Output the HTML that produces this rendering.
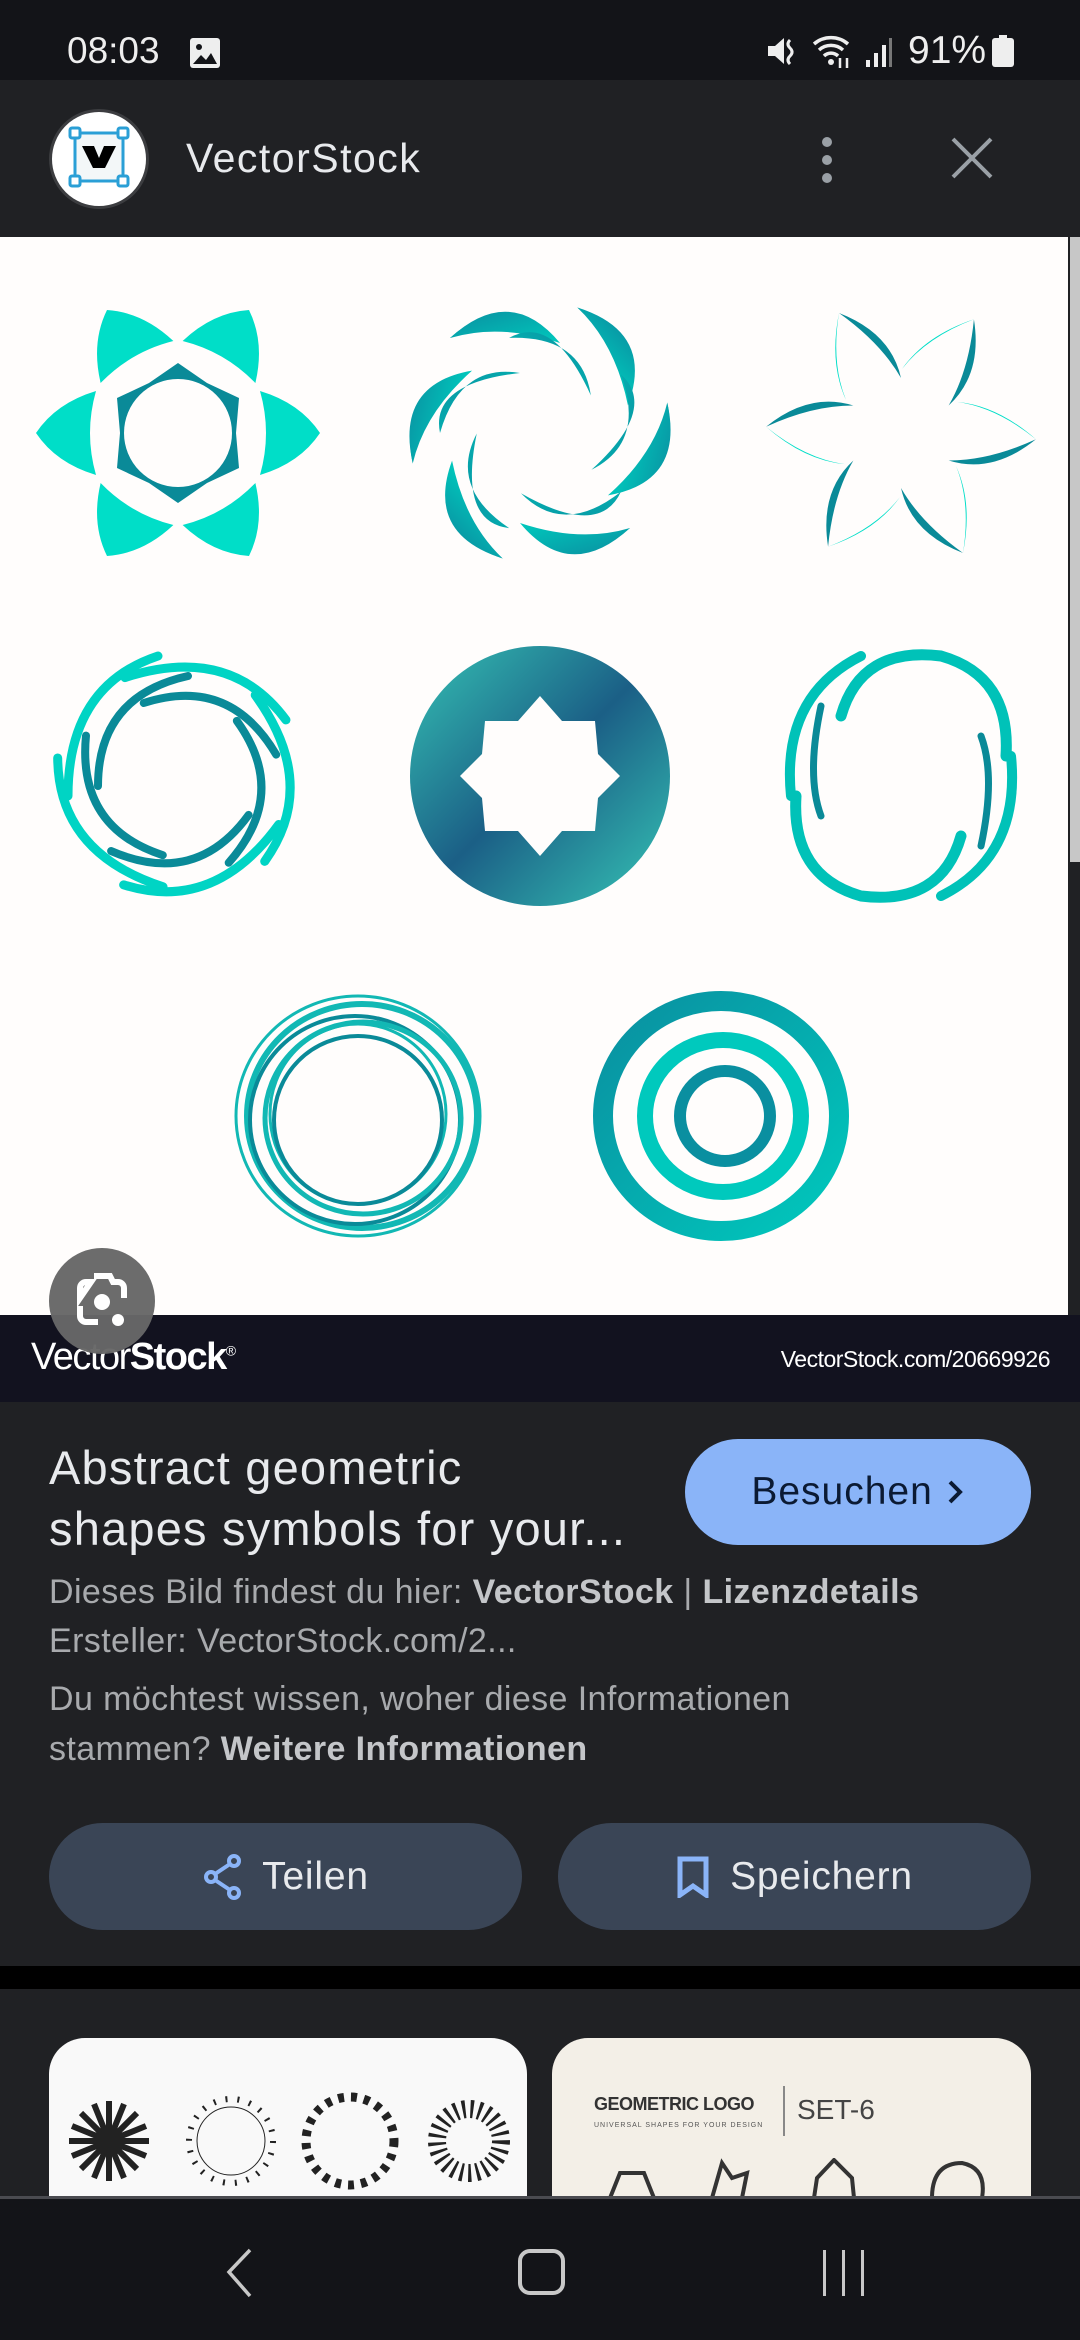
<!DOCTYPE html>
<html><head><meta charset="utf-8">
<style>
*{margin:0;padding:0;box-sizing:border-box}
html,body{width:1080px;height:2340px;overflow:hidden;background:#202124;font-family:"Liberation Sans",sans-serif}
.abs{position:absolute}
#status{left:0;top:0;width:1080px;height:80px;background:#131418;color:#eee}
#hdr{left:0;top:80px;width:1080px;height:157px;background:#202124}
#img{left:0;top:237px;width:1068px;height:1078px;background:#fffdfc}
#scroll{left:1068px;top:80px;width:12px;height:1235px;background:#202124}
#thumb{left:1070px;top:237px;width:10px;height:625px;background:#c7c7c7}
#vsbar{left:0;top:1315px;width:1080px;height:87px;background:#12121f;color:#fff}
#info{left:0;top:1402px;width:1080px;height:564px;background:#202124}
.g{color:#a8aaad;font-size:34px;letter-spacing:0.4px;position:absolute;left:49px;white-space:nowrap}
.g b{color:#c4c6c9}
.btn{position:absolute;top:1823px;height:107px;border-radius:54px;background:#3a4556;color:#e8eaed;font-size:39px;letter-spacing:0.8px;display:flex;align-items:center;justify-content:center}
#strip{left:0;top:1966px;width:1080px;height:23px;background:#000}
.card{position:absolute;top:2038px;height:158px;border-radius:36px 36px 0 0;overflow:hidden}
#nav{left:0;top:2196px;width:1080px;height:144px;background:#131418;border-top:3px solid #4a4b50}
</style></head><body>
<div id="status" class="abs">
 <div class="abs" style="left:67px;top:30px;font-size:37px;">08:03</div>
 <svg class="abs" style="left:189px;top:37px" width="32" height="32" viewBox="0 0 32 32"><rect x="1" y="1" width="30" height="30" rx="3" fill="#eee"/><circle cx="10" cy="10" r="3" fill="#131418"/><path d="M4 27 L12 18 L17 23 L22 16 L28 27Z" fill="#131418"/></svg>
 <svg class="abs" style="left:766px;top:34px" width="34" height="34" viewBox="0 0 34 34"><path d="M2 12h7l9-8v26l-9-8H2z" fill="#eee"/><path d="M24 6q-4 4 0 8t0 8 0 8" stroke="#eee" stroke-width="3" fill="none"/></svg>
 <svg class="abs" style="left:812px;top:32px" width="40" height="38" viewBox="0 0 40 38"><path d="M2 12a26 26 0 0 1 34 0M7 18a18 18 0 0 1 24 0M12 24a10 10 0 0 1 14 0" stroke="#eee" stroke-width="3.5" fill="none"/><circle cx="19" cy="30" r="3" fill="#eee"/><path d="M28 26v10M35 36V26" stroke="#eee" stroke-width="2.5"/></svg>
 <svg class="abs" style="left:865px;top:36px" width="28" height="32" viewBox="0 0 28 32"><rect x="1" y="24" width="4" height="7" fill="#eee"/><rect x="9" y="17" width="4" height="14" fill="#eee"/><rect x="17" y="9" width="4" height="22" fill="#eee"/><rect x="24" y="2" width="3" height="29" fill="#777"/></svg>
 <div class="abs" style="left:908px;top:29px;font-size:39px;">91%</div>
 <svg class="abs" style="left:991px;top:35px" width="24" height="32" viewBox="0 0 24 32"><rect x="8" y="0" width="8" height="4" fill="#eee"/><rect x="1" y="3" width="22" height="29" rx="3" fill="#eee"/></svg>
</div>
<div id="hdr" class="abs">
 <div class="abs" style="left:49px;top:29px;width:100px;height:100px;border-radius:50%;background:#fff;border:3px solid #3c3d40"></div>
 <svg class="abs" style="left:68px;top:46px" width="62" height="62" viewBox="0 0 62 62"><rect x="7" y="7" width="48" height="48" fill="#f3f7f8" stroke="#2a9fd6" stroke-width="3"/><rect x="2" y="2" width="10" height="10" rx="2" fill="#fff" stroke="#2a9fd6" stroke-width="3"/><rect x="50" y="2" width="10" height="10" rx="2" fill="#fff" stroke="#2a9fd6" stroke-width="3"/><rect x="2" y="50" width="10" height="10" rx="2" fill="#fff" stroke="#2a9fd6" stroke-width="3"/><rect x="50" y="50" width="10" height="10" rx="2" fill="#fff" stroke="#2a9fd6" stroke-width="3"/><path d="M14 20h12l5 12 5-12h12l-11 22h-12z" fill="#000"/></svg>
 <div class="abs" style="left:186px;top:55px;font-size:41px;letter-spacing:1.5px;color:#e8eaed">VectorStock</div>
 <div class="abs" style="left:822px;top:57px;width:10px;height:10px;border-radius:5px;background:#9aa0a6;box-shadow:0 18px 0 #9aa0a6,0 36px 0 #9aa0a6"></div>
 <svg class="abs" style="left:950px;top:56px" width="44" height="44" viewBox="0 0 44 44"><path d="M3 3L41 41M41 3L3 41" stroke="#9aa0a6" stroke-width="4"/></svg>
</div>
<div id="scroll" class="abs"></div>
<div id="img" class="abs">
<svg width="1068" height="1078" viewBox="0 237 1068 1078">
<defs>
<linearGradient id="tg" x1="0" y1="0" x2="1" y2="1"><stop offset="0" stop-color="#0a8fa0"/><stop offset="1" stop-color="#00c9bd"/></linearGradient>
<linearGradient id="bg" x1="0" y1="0" x2="1" y2="1"><stop offset="0" stop-color="#35c2b4"/><stop offset="0.5" stop-color="#1b5f86"/><stop offset="1" stop-color="#36c6b6"/></linearGradient>
</defs>
<!-- shape1 -->
<g transform="translate(178,433)">
 <g fill="#00dec8">
  <path id="pt" d="M82 -42Q122 -30 142 0Q122 30 82 42Q94 0 82 -42Z"/>
  <use href="#pt" transform="rotate(60)"/><use href="#pt" transform="rotate(120)"/><use href="#pt" transform="rotate(180)"/><use href="#pt" transform="rotate(240)"/><use href="#pt" transform="rotate(300)"/>
 </g>
 <g id="pc"><path d="M82 -42Q108 -62 130 -75Q120 -110 122 -142L75 -72Z" fill="none"/></g>
 <path d="M61 35L29 50L0 70L-29 50L-61 35L-58 0L-61 -35L-29 -50L0 -70L29 -50L61 -35L58 0Z" fill="#0a8a98"/>
 <circle r="54" fill="#fffdfc"/>
</g>
<!-- shape2 swirl -->
<g transform="translate(540,433)" fill="url(#tg)">
 <g id="sw"><path d="M-90 -95Q-40 -140 10 -100Q-40 -120 -90 -95Z" /><path d="M-90 -95Q-30 -150 20 -90Q-40 -110 -90 -95Z"/></g>
 <use href="#sw" transform="rotate(60)"/><use href="#sw" transform="rotate(120)"/><use href="#sw" transform="rotate(180)"/><use href="#sw" transform="rotate(240)"/><use href="#sw" transform="rotate(300)"/>
 <g id="sw2"><path d="M-20 -60Q-80 -70 -100 0Q-110 -50 -20 -60Z"/></g>
 <use href="#sw2" transform="rotate(72)"/><use href="#sw2" transform="rotate(144)"/><use href="#sw2" transform="rotate(216)"/><use href="#sw2" transform="rotate(288)"/>
</g>
<!-- shape3 -->
<g transform="translate(901,433)">
 <g id="p3"><path d="M-62 -120Q-10 -100 0 -55Q-20 -90 -62 -120Z" fill="#0a8a98"/><path d="M-62 -120Q-70 -70 -55 -33Q-72 -70 -62 -120Z" fill="#00dec8"/></g>
 <use href="#p3" transform="rotate(60)"/><use href="#p3" transform="rotate(120)"/><use href="#p3" transform="rotate(180)"/><use href="#p3" transform="rotate(240)"/><use href="#p3" transform="rotate(300)"/>
</g>
<!-- shape4 -->
<g transform="translate(178,776)" fill="none" stroke-linecap="round">
 <g id="s4"><path d="M-20 -120Q-110 -90 -110 20" stroke="#00d4c4" stroke-width="9"/><path d="M10 -100Q-80 -80 -80 10" stroke="#0a8a98" stroke-width="8"/></g>
 <use href="#s4" transform="rotate(72)"/><use href="#s4" transform="rotate(144)"/><use href="#s4" transform="rotate(216)"/><use href="#s4" transform="rotate(288)"/>
</g>
<!-- shape5 -->
<g transform="translate(540,776)">
 <circle r="130" fill="url(#bg)"/>
 <path d="M0 -80L22 -55L55 -55L58 -22L80 0L58 22L55 55L22 55L0 80L-22 55L-55 55L-58 22L-80 0L-58 -22L-55 -55L-22 -55Z" fill="#fffdfc"/>
</g>
<!-- shape6 -->
<g transform="translate(901,776)" fill="none" stroke="#00c2b8" stroke-linecap="round">
 <path d="M-40 -120Q-120 -80 -110 20" stroke-width="10"/>
 <path d="M-60 -60Q-40 -130 40 -120Q110 -100 105 -20" stroke-width="11"/>
 <path d="M40 120Q120 80 110 -20" stroke-width="10"/>
 <path d="M60 60Q40 130 -40 120Q-110 100 -105 20" stroke-width="11"/>
 <path d="M-80 -70Q-95 0 -80 40" stroke="#0a8a98" stroke-width="7"/>
 <path d="M80 70Q95 0 80 -40" stroke="#0a8a98" stroke-width="7"/>
</g>
<!-- shape7 -->
<g transform="translate(358,1116)" fill="none" stroke="#12b8b4">
 <ellipse rx="122" ry="120" stroke-width="3"/>
 <ellipse rx="115" ry="112" cx="4" stroke-width="6"/>
 <ellipse rx="105" ry="104" cx="-3" cy="4" stroke-width="4" stroke="#0a8a98"/>
 <ellipse rx="98" ry="96" cx="5" cy="2" stroke-width="5"/>
 <ellipse rx="88" ry="90" cy="-2" stroke-width="3"/>
 <ellipse rx="84" ry="84" cy="4" stroke-width="4" stroke="#0a8a98"/>
</g>
<!-- shape8 -->
<g transform="translate(721,1116)" fill="none">
 <ellipse rx="118" ry="115" stroke="url(#tg)" stroke-width="20"/>
 <ellipse rx="78" ry="76" cx="2" stroke="#00c9bd" stroke-width="16"/>
 <ellipse rx="45" ry="45" cx="4" stroke="#0a8fa0" stroke-width="12"/>
</g>
</svg>
</div>
<div id="thumb" class="abs"></div>
<div id="vsbar" class="abs">
 <div class="abs" style="left:31px;top:21px;font-size:38px;letter-spacing:-1.5px"><span style="font-weight:300">Vector</span><b>Stock</b><sup style="font-size:14px">®</sup></div>
 <div class="abs" style="right:30px;top:31px;font-size:23px;letter-spacing:-0.5px">VectorStock.com/20669926</div>
</div>
<div class="abs" style="left:49px;top:1248px;width:106px;height:106px;border-radius:50%;background:#676767;opacity:.97"></div>
<svg class="abs" style="left:74px;top:1272px" width="56" height="58" viewBox="0 0 56 58"><path d="M20 4h16l3 6h5a6 6 0 0 1 6 6v10M6 26V16a6 6 0 0 1 6-6h5zM6 34v10a6 6 0 0 0 6 6h12" stroke="#fff" stroke-width="6" fill="none"/><circle cx="28" cy="30" r="8" fill="#fff"/><circle cx="44" cy="48" r="6" fill="#fff"/></svg>
<div id="info" class="abs">
 <div class="abs" style="left:49px;top:35px;font-size:47px;letter-spacing:1.2px;line-height:61px;color:#e8eaed;white-space:nowrap">Abstract geometric<br>shapes symbols for your...</div>
 <div class="abs" style="left:685px;top:37px;width:346px;height:106px;border-radius:53px;background:#8ab4f8;color:#0b1a33;font-size:39px;letter-spacing:1px;display:flex;align-items:center;justify-content:center">Besuchen&nbsp;<svg width="20" height="30" viewBox="0 0 20 30"><path d="M5 5L15 15L5 25" stroke="#0b1a33" stroke-width="4" fill="none"/></svg></div>
</div>
<div class="g" style="top:1573px">Dieses Bild findest du hier: <b>VectorStock</b> | <b>Lizenzdetails</b></div>
<div class="g" style="top:1622px">Ersteller: VectorStock.com/2...</div>
<div class="g" style="top:1680px">Du möchtest wissen, woher diese Informationen</div>
<div class="g" style="top:1730px">stammen? <b>Weitere Informationen</b></div>
<div class="btn" style="left:49px;width:473px"><svg width="42" height="48" viewBox="0 0 42 48" style="margin-right:18px"><circle cx="32" cy="8" r="5" stroke="#8ab4f8" stroke-width="4" fill="none"/><circle cx="9" cy="24" r="5" stroke="#8ab4f8" stroke-width="4" fill="none"/><circle cx="32" cy="40" r="5" stroke="#8ab4f8" stroke-width="4" fill="none"/><path d="M28 11L13 21M13 27L28 37" stroke="#8ab4f8" stroke-width="4"/></svg>Teilen</div>
<div class="btn" style="left:558px;width:473px"><svg width="34" height="42" viewBox="0 0 34 42" style="margin-right:20px"><path d="M4 3h26v36l-13-9-13 9z" stroke="#8ab4f8" stroke-width="5" fill="none"/></svg>Speichern</div>
<div id="strip" class="abs"></div>
<div class="card" style="left:49px;width:478px;background:#f9f9f9">
 <svg width="478" height="200" viewBox="0 0 478 200" fill="none" stroke="#222">
  <g transform="translate(60,103)" stroke-width="6"><path d="M-40 0H40M0 -40V40M-28 -28L28 28M28 -28L-28 28M-15 -37L15 37M15 -37L-15 37M-37 -15L37 15M37 -15L-37 15"/></g>
  <circle cx="182" cy="103" r="42" stroke-width="6" stroke-dasharray="2 10"/><circle cx="182" cy="103" r="34" stroke-width="1"/>
  <circle cx="301" cy="103" r="44" stroke-width="9" stroke-dasharray="6 7"/>
  <circle cx="420" cy="103" r="32" stroke-width="18" stroke-dasharray="3 5"/>
 </svg>
</div>
<div class="card" style="left:552px;width:479px;background:#f3efe7">
 <div class="abs" style="left:42px;top:56px;font-size:18px;font-weight:bold;color:#333;letter-spacing:-0.5px">GEOMETRIC LOGO</div>
 <div class="abs" style="left:42px;top:84px;font-size:7px;color:#555;letter-spacing:1px">UNIVERSAL SHAPES FOR YOUR DESIGN</div>
 <div class="abs" style="left:231px;top:48px;width:2px;height:50px;background:#888"></div>
 <div class="abs" style="left:245px;top:56px;font-size:28px;color:#444">SET-6</div>
 <svg class="abs" style="left:0;top:120px" width="479" height="40" viewBox="0 0 479 40" fill="none" stroke="#333" stroke-width="4"><path d="M58 40L68 15H92L102 40"/><path d="M160 40L170 5L180 20L195 15L190 40"/><path d="M262 40L265 20L282 2L300 20L302 40"/><path d="M380 40Q380 5 410 5Q435 10 430 40"/></svg>
</div>
<div id="nav" class="abs">
 <svg class="abs" style="left:224px;top:49px" width="30" height="50" viewBox="0 0 30 50"><path d="M26 2L5 24L26 48" stroke="#c8c8c8" stroke-width="3.5" fill="none"/></svg>
 <div class="abs" style="left:518px;top:50px;width:47px;height:46px;border:4px solid #c8c8c8;border-radius:12px"></div>
 <div class="abs" style="left:823px;top:51px;width:3px;height:46px;background:#c8c8c8;box-shadow:19px 0 0 #c8c8c8,38px 0 0 #c8c8c8"></div>
</div>
</body></html>
